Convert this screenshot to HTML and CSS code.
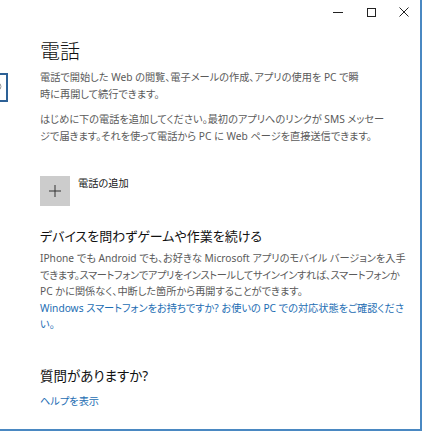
FILE: index.html
```html
<!DOCTYPE html>
<html lang="ja">
<head>
    <meta charset="UTF-8">
    <meta name="viewport" content="width=device-width, initial-scale=1.0">
    <title>電話</title>
    <link rel="stylesheet" href="styles.css">
</head>
<body>

    <div class="window">
        <div class="titlebar">
            <span class="control">
                <svg width="10" height="10" viewBox="0 0 10 10"><path d="M0 5.5h10" stroke="#222" stroke-width="1"/></svg>
            </span>
            <span class="control">
                <svg width="10" height="10" viewBox="0 0 10 10"><rect x="1.5" y="1.5" width="8" height="8" fill="none" stroke="#222" stroke-width="1"/></svg>
            </span>
            <span class="control">
                <svg width="10" height="10" viewBox="0 0 10 10"><path d="M0.5 0.5l9 9M9.5 0.5l-9 9" stroke="#222" stroke-width="1"/></svg>
            </span>
        </div>

        <!-- search box of the side menu, cut off at the left edge -->
        <div class="search">
            <svg width="11" height="11" viewBox="0 0 11 11"><circle cx="6.5" cy="4.5" r="3.5" fill="none" stroke="#999" stroke-width="1"/><path d="M4 7l-3 3" stroke="#999" stroke-width="1"/></svg>
        </div>

        <div class="content">
            <h1>電話</h1>
            <p class="text">電話で開始した Web の閲覧、電子メールの作成、アプリの使用を PC で瞬<br>時に再開して続行できます。</p>
            <p class="text">はじめに下の電話を追加してください。最初のアプリへのリンクが SMS メッセー<br>ジで届きます。それを使って電話から PC に Web ページを直接送信できます。</p>

            <div class="add-phone">
                <span class="add-tile">
                    <svg width="12" height="12" viewBox="0 0 12 12"><path d="M6 0v12M0 6h12" stroke="#333" stroke-width="1"/></svg>
                </span>
                <span class="add-label">電話の追加</span>
            </div>

            <h2>デバイスを問わずゲームや作業を続ける</h2>
            <p class="text">IPhone でも Android でも、お好きな Microsoft アプリのモバイル バージョンを入手<br><span class="tight">できます。スマートフォンでアプリをインストールしてサインインすれば、スマートフォンか</span><br>PC かに関係なく、中断した箇所から再開することができます。</p>
            <a class="link block" href="#">Windows スマートフォンをお持ちですか? お使いの PC での対応状態をご確認くださ<br>い。</a>

            <h2 class="help-title">質問がありますか?</h2>
            <a class="link" href="#">ヘルプを表示</a>
        </div>
    </div>

</body>
</html>
```

FILE: styles.css
```css
body {
    margin: 0;
    padding: 0;
    background-color: #fff;
    font-family: "Noto Sans", "Noto Sans CJK JP", sans-serif;
    font-feature-settings: "palt";
}
.window {
    position: relative;
    box-sizing: border-box;
    width: 422px;
    height: 431px;
    border-right: 2px solid #4a88c2;
    border-bottom: 2px solid #4a88c2;
    overflow: hidden;
}
.titlebar {
    display: flex;
    justify-content: flex-end;
    height: 24px;
}
.control {
    display: flex;
    align-items: center;
    justify-content: center;
    width: 33px;
    height: 24px;
}
.search {
    position: absolute;
    left: -120px;
    top: 73px;
    box-sizing: border-box;
    width: 128px;
    height: 29px;
    border: 2px solid #2d6196;
    display: flex;
    align-items: center;
    justify-content: flex-end;
    padding-right: 4px;
}
.content {
    padding: 15px 0 0 40px;
}
h1 {
    margin: 0;
    font-size: 20px;
    font-weight: 300;
    line-height: 26px;
    color: #111;
}
.text {
    margin: 4px 0 0;
    font-size: 10.2px;
    line-height: 16.5px;
    color: #5a5a5a;
    white-space: nowrap;
}
.text + .text {
    margin-top: 9px;
}
.tight {
    letter-spacing: -0.3px;
}
.add-phone {
    display: flex;
    gap: 8px;
    margin-top: 32px;
}
.add-tile {
    display: flex;
    align-items: center;
    justify-content: center;
    width: 30px;
    height: 30px;
    background: #cccccc;
}
.add-label {
    font-size: 10.2px;
    line-height: 14px;
    color: #1a1a1a;
}
h2 {
    margin: 20px 0 0;
    font-size: 13px;
    font-weight: 400;
    line-height: 20px;
    color: #111;
}
.link {
    font-size: 10.2px;
    line-height: 16.5px;
    color: #1c6db3;
    text-decoration: none;
    white-space: nowrap;
}
.link.block {
    display: block;
}
.help-title {
    margin-top: 33px;
    font-size: 13.5px;
}
.help-title + .link {
    display: block;
    margin-top: 7px;
}
```
